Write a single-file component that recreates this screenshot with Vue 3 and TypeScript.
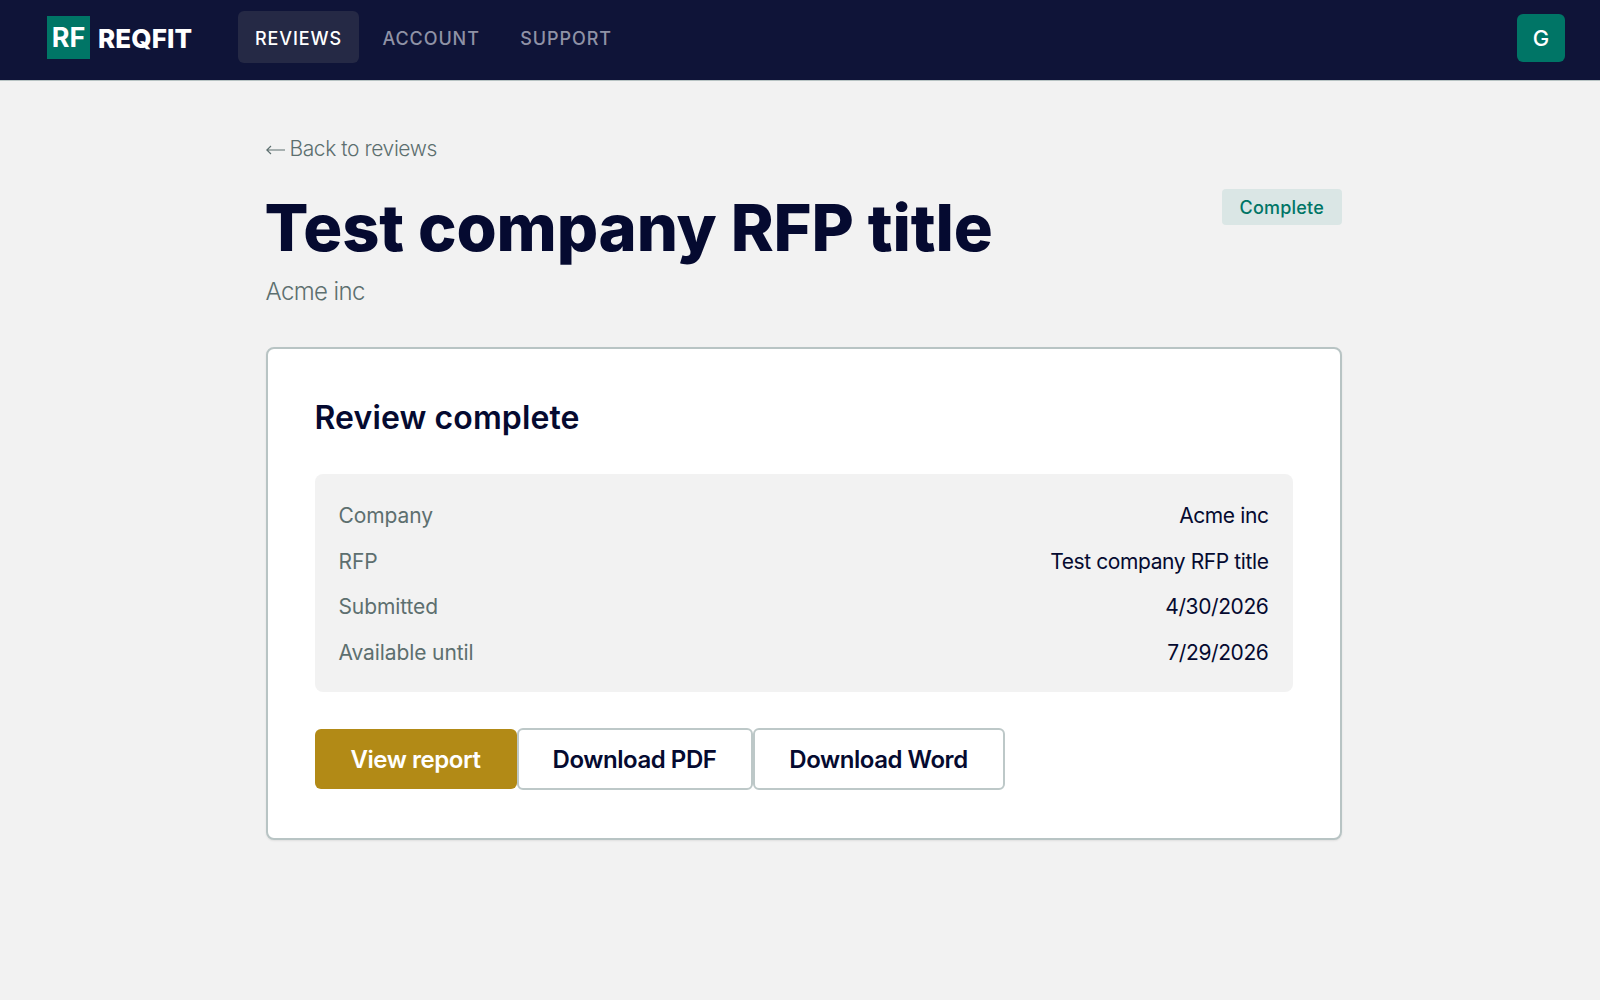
<script setup lang="ts">
const navItems: { label: string; active: boolean }[] = [
  { label: 'REVIEWS', active: true },
  { label: 'ACCOUNT', active: false },
  { label: 'SUPPORT', active: false }
]
const rows: { k: string; v: string }[] = [
  { k: 'Company', v: 'Acme inc' },
  { k: 'RFP', v: 'Test company RFP title' },
  { k: 'Submitted', v: '4/30/2026' },
  { k: 'Available until', v: '7/29/2026' }
]
</script>

<template>
  <div class="page">
    <header class="bar">
      <div class="logo">
        <span class="mark">RF</span>
        <span class="word">REQFIT</span>
      </div>
      <nav class="nav">
        <a v-for="n in navItems" :key="n.label" class="nav-item" :class="{ active: n.active }">{{ n.label }}</a>
      </nav>
      <div class="avatar">G</div>
    </header>
    <main class="main">
      <a class="back">
        <svg class="arrow" width="19" height="10" viewBox="0 0 19 10" fill="none" stroke="currentColor" stroke-width="1.2">
          <path d="M0.8 5H19M5 1L0.8 5L5 9" />
        </svg>
        <span>Back to reviews</span>
      </a>
      <div class="head">
        <div>
          <h1 class="title">Test company RFP title</h1>
          <p class="sub">Acme inc</p>
        </div>
        <span class="badge">Complete</span>
      </div>
      <section class="card">
        <h2 class="card-title">Review complete</h2>
        <dl class="info">
          <div v-for="r in rows" :key="r.k" class="row">
            <dt>{{ r.k }}</dt>
            <dd>{{ r.v }}</dd>
          </div>
        </dl>
        <div class="actions">
          <button class="btn primary">View report</button>
          <button class="btn outline pdf">Download PDF</button>
          <button class="btn outline word-btn">Download Word</button>
        </div>
      </section>
    </main>
  </div>
</template>

<style>
html, body { margin: 0; background: #f2f2f2; }
</style>

<style scoped>
.page {
  min-height: 1000px;
  background: #f2f2f2;
  font-family: Inter, "Noto Sans", sans-serif;
  color: #050a30;
}
.bar {
  height: 80px;
  background: #0f1438;
  border-bottom: 1px solid #b8c4c4;
  display: flex;
  align-items: center;
  padding: 0 35px 0 47px;
}
.logo { display: flex; align-items: center; gap: 8px; width: 191px; margin-top: -5px; }
.mark {
  width: 43px;
  height: 43px;
  background: #007566;
  color: #fff;
  font: 700 27px/44px Inter, sans-serif;
  text-align: center;
  letter-spacing: 0;
}
.word { color: #fff; font: 800 26px/28px Inter, sans-serif; letter-spacing: 0.1px; padding-top: 2px; }
.nav { display: flex; gap: 6.5px; margin-top: -6px; }
.nav-item {
  height: 52px;
  line-height: 55px;
  padding: 0 17px;
  border-radius: 6px;
  font-size: 18px;
  font-weight: 500;
  letter-spacing: 0.9px;
  color: #8f92a6;
}
.nav-item.active { background: #252945; color: #fff; }
.avatar {
  margin-left: auto;
  margin-top: -4px;
  width: 48px;
  height: 48px;
  border-radius: 6px;
  background: #007566;
  color: #fff;
  font-size: 22px;
  font-weight: 500;
  line-height: 49px;
  text-align: center;
}
.main { width: 1076px; margin-left: 265.5px; }
.back {
  display: flex;
  align-items: center;
  gap: 4.5px;
  margin-top: 54px;
  font-size: 21px;
  line-height: 28px;
  color: #5d6f6f;
  letter-spacing: -0.42px;
  font-weight: 350;
}
.arrow { flex: none; margin: 2px 0 0 0.5px; }
.head { display: flex; justify-content: space-between; align-items: flex-start; margin-top: 25px; }
.title { margin: 0 0 0 -1px; font-size: 65px; line-height: 80px; font-weight: 800; color: #050a30; letter-spacing: -0.16px; }
.sub { margin: 8px 0 0; font-size: 24px; line-height: 32px; color: #5d6f6f; font-weight: 350; letter-spacing: -0.6px; }
.badge {
  margin-top: 1px;
  height: 36px;
  line-height: 38px;
  padding: 0 17.5px;
  border-radius: 4px;
  background: #dae6e5;
  color: #007566;
  font-size: 18px;
  font-weight: 500;
  letter-spacing: 0.2px;
}
.card {
  margin-top: 39px;
  box-sizing: border-box;
  height: 493px;
  background: #fff;
  border: 2px solid #b8c4c4;
  border-radius: 8px;
  padding: 47px;
  box-shadow: 0 1px 2px rgba(0, 0, 0, 0.08);
}
.card-title { margin: 0; font-size: 32px; line-height: 44px; font-weight: 600; color: #050a30; letter-spacing: 0.11px; }
.info {
  margin: 34px 0 0;
  height: 218px;
  box-sizing: border-box;
  padding: 19px 24px;
  background: #f2f2f2;
  border-radius: 8px;
}
.row {
  display: flex;
  justify-content: space-between;
  height: 45.5px;
  line-height: 45.5px;
  font-size: 21px;
}
.row dt { color: #5d6f6f; letter-spacing: -0.1px; }
.row dd { margin: 0; color: #050a30; letter-spacing: -0.4px; }
.actions { display: flex; align-items: center; margin-top: 36px; }
.btn {
  font: 600 24px/1 Inter, sans-serif;
  letter-spacing: -0.45px;
  border-radius: 6px;
  box-sizing: border-box;
  padding: 2px 0 0;
}
.primary { width: 202px; height: 60px; background: #b28a16; color: #fff; border: none; }
.outline { height: 62px; background: #fff; color: #050a30; border: 2px solid #bdc8c8; }
.pdf { width: 236px; }
.word-btn { width: 252px; }
</style>
